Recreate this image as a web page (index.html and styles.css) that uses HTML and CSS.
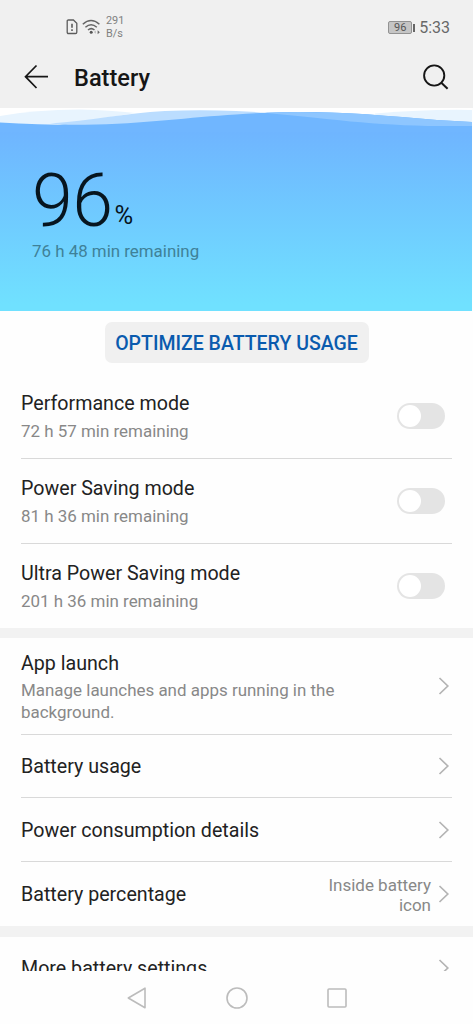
FILE: index.html
```html
<!DOCTYPE html>
<html lang="en">
<head>
<meta charset="utf-8">
<title>Battery</title>
<link rel="stylesheet" href="styles.css">
</head>
<body>
<div class="screen">
  <header class="header">
    <div class="status">
      <svg class="sim" width="12" height="16" viewBox="0 0 12 16"><path d="M1.2 2.200q0-1.200 1.200-1.200h5L10.800 4.200v9q0 1.300-1.300 1.300H2.500q-1.300 0-1.300-1.300z" fill="none" stroke="#5c5c5c" stroke-width="1.300"/><path d="M6 4.800v4M6 10.200v1.800" stroke="#5c5c5c" stroke-width="1.600"/></svg>
      <svg class="wifi" width="20" height="16" viewBox="0 0 20 16"><g fill="none" stroke="#666" stroke-width="1.500"><path d="M.8 5.200q8.200-7.400 16.600 0"/><path d="M3.400 8.200q5.700-5 11.400 0"/><path d="M6 11q3.200-2.700 6.500 0"/></g><circle cx="9.200" cy="13.300" r="1.500" fill="#555"/><path d="M13.600 11.500v3.200l-1.400-1.600z" fill="#aaa"/><path d="M15.600 11.200v4l2.200-2z" fill="#666"/></svg>
      <div class="speed">291<br>B/s</div>
      <div class="cell"><span class="level">96</span><span class="tip"></span></div>
      <div class="clock">5:33</div>
    </div>
    <div class="bar">
      <svg class="back" width="26" height="26" viewBox="0 0 26 26"><path d="M13.500 1.500 2.500 12.700l11 11.300M2.500 12.700h22.500" fill="none" stroke="#161616" stroke-width="1.700"/></svg>
      <h1 class="title">Battery</h1>
      <svg class="search" width="28" height="28" viewBox="0 0 28 28"><circle cx="12.200" cy="12.500" r="10.100" fill="none" stroke="#161616" stroke-width="1.900"/><path d="M19.300 19.700l6.300 6.100" stroke="#161616" stroke-width="2"/></svg>
    </div>
  </header>

  <section class="hero">
    <svg class="waves" width="472" height="24" viewBox="0 0 472 24">
      <path d="M0 0H472V16H0z" fill="#fff"/>
      <path d="M0 8Q35 1.500 80 1.500Q110 2 135 5L60 17H0z" fill="#e8f4fe"/>
      <path d="M50 15.500C90 13 125 5 165 3Q200 1.500 236 3Q265 4 290 8L236 12L80 18z" fill="#bbddff"/>
      <path d="M375 5.500Q430 1 472 2V16L375 9z" fill="#e8f4fe"/>
      <path d="M0 14.500Q40 17 85 16.800C145 16 190 9 236 6.500C270 4 300 3.500 330 4.500C380 6 425 12 472 14V24H0z" fill="#70b6ff"/>
      <path d="M265 4.700Q295 3.500 330 4.500C380 6 425 12 472 14V18C385 19 350 13 265 4.700z" fill="#8ec6ff"/>
    </svg>
    <div class="charge"><span class="number">96</span><span class="percent">%</span></div>
    <div class="left">76 h 48 min remaining</div>
  </section>

  <div class="action"><button class="optimize">OPTIMIZE BATTERY USAGE</button></div>

  <section class="group">
    <div class="row mode"><div class="copy"><div class="name">Performance mode</div><div class="note">72 h 57 min remaining</div></div><span class="toggle"></span></div>
    <div class="row mode"><div class="copy"><div class="name">Power Saving mode</div><div class="note">81 h 36 min remaining</div></div><span class="toggle"></span></div>
    <div class="row mode"><div class="copy"><div class="name">Ultra Power Saving mode</div><div class="note">201 h 36 min remaining</div></div><span class="toggle"></span></div>
  </section>
  <div class="gap"></div>
  <section class="group">
    <div class="row launch"><div class="copy"><div class="name">App launch</div><div class="note">Manage launches and apps running in the<br>background.</div></div><svg class="chevron" width="12" height="18" viewBox="0 0 12 18"><path d="M1.500 1 9.800 9l-8.300 8"/></svg></div>
    <div class="row link"><div class="name">Battery usage</div><svg class="chevron" width="12" height="18" viewBox="0 0 12 18"><path d="M1.500 1 9.800 9l-8.300 8"/></svg></div>
    <div class="row link"><div class="name">Power consumption details</div><svg class="chevron" width="12" height="18" viewBox="0 0 12 18"><path d="M1.500 1 9.800 9l-8.300 8"/></svg></div>
    <div class="row link"><div class="name">Battery percentage</div><div class="value">Inside battery<br>icon</div><svg class="chevron" width="12" height="18" viewBox="0 0 12 18"><path d="M1.500 1 9.800 9l-8.300 8"/></svg></div>
  </section>
  <div class="gap second"></div>
  <section class="group more">
    <div class="row link"><div class="name">More battery settings</div><svg class="chevron" width="12" height="18" viewBox="0 0 12 18"><path d="M1.500 1 9.800 9l-8.300 8"/></svg></div>
  </section>

  <nav class="nav">
    <svg width="22" height="24" viewBox="0 0 22 24"><path d="M19 2.200v19.600L2.300 12z"/></svg>
    <svg width="24" height="24" viewBox="0 0 24 24"><circle cx="12" cy="12" r="10"/></svg>
    <svg width="22" height="24" viewBox="0 0 22 24"><rect x="2" y="3" width="18" height="18" rx="1"/></svg>
  </nav>
</div>
</body>
</html>
```
FILE: styles.css
```css
* { box-sizing: border-box; }
body { margin: 0; background: #fff; font-family: Roboto, "Liberation Sans", sans-serif; }
.screen { width: 473px; height: 1024px; display: flex; flex-direction: column; overflow: hidden; background: #fefefe; }
.header { height: 108px; flex: none; background: #f0f0f0; }
.status { height: 54px; padding: 0 23px 0 66px; display: flex; align-items: center; }
.sim { margin-right: 4px; }
.wifi { margin-right: 4px; }
.speed { font-size: 10.900px; line-height: 12.500px; color: #808080; margin-right: auto; padding-top: 1px; }
.cell { display: flex; align-items: center; gap: 1px; padding-top: 1px; }
.level { width: 24px; height: 13px; border: 1px solid #929292; border-radius: 2px; background: #c5c5c5; font-size: 11px; line-height: 11px; text-align: center; color: #555; }
.tip { width: 2px; height: 8px; background: #666; }
.clock { margin-left: 4px; padding-top: 2px; font-size: 16px; line-height: 20px; color: #686868; }
.bar { height: 54px; padding: 0 23px 8px; display: flex; align-items: center; }
.title { margin: 0 auto 0 25px; padding-top: 1px; font-size: 23.600px; line-height: 28px; font-weight: 500; color: #161616; }
.hero { width: 472px; height: 203px; flex: none; background: linear-gradient(#6fb4ff 10%, #70e1ff 97%); }
.waves { display: block; }
.charge { height: 95px; padding: 23px 0 0 32px; display: flex; align-items: baseline; color: #07151f; }
.number { font-size: 73.500px; line-height: 92px; font-weight: 300; letter-spacing: -0.500px; }
.percent { font-size: 25.500px; margin-left: 2px; position: relative; top: -2px; }
.left { margin: 13px 0 0 32px; font-size: 16.900px; line-height: 22px; color: #3f8198; }
.action { height: 63px; flex: none; display: flex; justify-content: center; align-items: center; }
.optimize { width: 264px; height: 41px; padding: 2px 0 0; border: 0; border-radius: 7px; background: #f0f0f0; color: #0a5bae; font: 500 19.500px/39px Roboto, sans-serif; line-height: 40px; white-space: nowrap; }
.group { flex: none; padding: 0 21px; }
.row { display: flex; align-items: center; justify-content: space-between; border-bottom: 1px solid #d9d9d9; }
.row:last-child { border-bottom: 0; }
.mode { height: 85px; padding-right: 7px; }
.mode:last-child { height: 84px; }
.name { font-size: 19.650px; line-height: 26px; color: #222; white-space: nowrap; }
.note { font-size: 16.950px; line-height: 22px; color: #888; white-space: nowrap; }
.mode .note { margin-top: 3px; }
.toggle { width: 48px; height: 26px; border-radius: 13px; background: #e4e4e4; padding: 2px; }
.toggle::before { content: ""; display: block; width: 22px; height: 22px; border-radius: 50%; background: #fff; }
.gap { height: 10px; flex: none; background: #f2f2f2; }
.gap.second { height: 11px; }
.launch { height: 97px; padding-right: 2px; }
.launch .copy { padding-top: 2px; }
.launch .note { margin-top: 2px; }
.link { height: 64px; padding-right: 2px; }
.link:nth-child(2) { height: 63px; }
.link .name { padding-top: 2px; }
.value { margin-left: auto; margin-right: 7px; padding-top: 2px; font-size: 17px; line-height: 20px; color: #888; text-align: right; }
.chevron { flex: none; fill: none; stroke: #b4b4b4; stroke-width: 1.700; }
.more { height: 34px; overflow: hidden; }
.more .link { height: 62px; }
.nav { flex: 1; display: flex; justify-content: center; align-items: center; gap: 77px; }
.nav svg { fill: none; stroke: #bcbcbc; stroke-width: 1.600; stroke-linejoin: round; }
```
